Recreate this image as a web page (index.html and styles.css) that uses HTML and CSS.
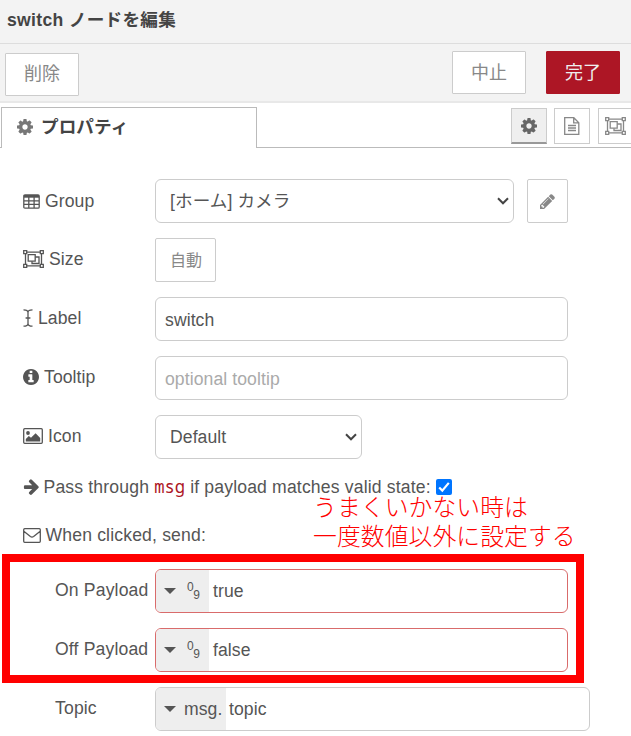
FILE: index.html
```html
<!DOCTYPE html>
<html lang="ja">
<head>
<meta charset="utf-8">
<title>switch ノードを編集</title>
<link rel="stylesheet" href="styles.css">
</head>
<body>
<svg class="defs" aria-hidden="true">
<symbol id="cog" viewBox="128 128 1536 1536"><path d="M1152 896q0-106-75-181t-181-75-181 75-75 181 75 181 181 75 181-75 75-181zm512-109v222q0 12-8 23t-20 13l-185 28q-19 54-39 91 35 50 107 138 10 12 10 25t-9 23q-27 37-99 108t-94 71q-12 0-26-9l-138-108q-44 23-91 38-16 136-29 186-7 28-36 28h-222q-14 0-24.5-8.5t-11.5-21.5l-28-184q-49-16-90-37l-141 107q-10 9-25 9-14 0-25-11-126-114-165-168-7-10-7-23 0-12 8-23 15-21 51-66.5t54-70.5q-27-50-41-99l-183-27q-13-2-21-12.5t-8-23.5v-222q0-12 8-23t19-13l186-28q14-46 39-92-40-57-107-138-10-12-10-24 0-10 9-23 26-36 98.5-107.5t94.5-71.5q13 0 26 10l138 107q44-23 91-38 16-136 29-186 7-28 36-28h222q14 0 24.5 8.5t11.5 21.5l28 184q49 16 90 37l142-107q9-9 24-9 13 0 25 10 129 119 165 170 7 8 7 22 0 12-8 23-15 21-51 66.5t-54 70.5q26 50 41 98l183 28q13 2 21 12.5t8 23.5z"/></symbol>
<symbol id="group" viewBox="0 0 21 18"><g fill="none" stroke="currentColor" stroke-width="1.3"><path d="M2.5 3.5v11M18.500 3.500v11M3.500 2.200h14M3.500 15.800h14"/><path d="M.7.7h3v3h-3zM17.300.7h3v3h-3zM.7 14.300h3v3h-3zM17.300 14.300h3v3h-3z"/><path d="M5.200 4.600h7v6.600h-7z"/><path d="M12.200 7h3.800v6.500H9v-2.300"/></g></symbol>
</svg>
<header class="title">switch ノードを編集</header>
<div class="toolbar">
  <button class="btn delete">削除</button>
  <button class="btn cancel">中止</button>
  <button class="btn done">完了</button>
</div>
<nav class="tabs">
  <div class="tab"><svg class="i16"><use href="#cog"/></svg><span>プロパティ</span></div>
  <div class="tab-tools">
    <div class="tool active"><svg class="i16"><use href="#cog"/></svg></div>
    <div class="tool"><svg class="doc" viewBox="0 0 16 18"><g fill="none" stroke="currentColor" stroke-width="1.3"><path d="M1.500.7h8.300l5 5v11.600H.7V.7zM9.700.7v5.200h5.100"/><path d="M4 8.500h8M4 11h8M4 13.500h8"/></g></svg></div>
    <div class="tool"><svg class="grp"><use href="#group"/></svg></div>
  </div>
</nav>
<main class="form">
  <div class="row">
    <label><svg class="tbl" viewBox="0 0 17 15"><path fill="none" stroke="currentColor" stroke-width="1.300" d="M2 .8h13q1.200 0 1.200 1.200v11q0 1.200-1.200 1.200H2Q.8 14.200.8 13V2Q.8.800 2 .8zM.8 6.800h15.400M.8 10.400h15.400M5.800 3v11M11.100 3v11"/><path d="M1 1h15v2.700H1z"/></svg>Group</label>
    <div class="field select wide">[ホーム] カメラ<svg class="chev" viewBox="0 0 12 8"><path d="M1 1.300l5 5 5-5"/></svg></div>
    <div class="edit"><svg viewBox="128 128 1536 1536"><path d="M491 1536l91-91-235-235-91 91v107h128v128h107zm523-928q0-22-22-22-10 0-17 7l-542 542q-7 7-7 17 0 22 22 22 10 0 17-7l542-542q7-7 7-17zm-54-192l416 416-832 832h-416v-416zm683 96q0 53-37 90l-166 166-416-416 166-165q36-38 90-38 53 0 91 38l235 234q37 39 37 91z"/></svg></div>
  </div>
  <div class="row raised">
    <label><svg class="grp"><use href="#group"/></svg>Size</label>
    <div class="auto">自動</div>
  </div>
  <div class="row raised">
    <label><svg class="beam" viewBox="0 0 10 18"><path fill="none" stroke="currentColor" stroke-width="1.300" d="M.5.8Q5 .8 5 3.500 5 .8 9.500.8M5 3.500v11M.5 17.200Q5 17.200 5 14.500 5 17.200 9.500 17.200M2.600 9h4.800"/></svg>Label</label>
    <div class="field">switch</div>
  </div>
  <div class="row raised">
    <label><svg class="i16" viewBox="128 128 1536 1536"><path d="M1152 1376v-160q0-14-9-23t-23-9h-96v-512q0-14-9-23t-23-9h-320q-14 0-23 9t-9 23v160q0 14 9 23t23 9h96v320h-96q-14 0-23 9t-9 23v160q0 14 9 23t23 9h448q14 0 23-9t9-23zm-128-896v-160q0-14-9-23t-23-9h-192q-14 0-23 9t-9 23v160q0 14 9 23t23 9h192q14 0 23-9t9-23zm640 416q0 209-103 385.500t-279.500 279.500-385.500 103-385.500-103-279.500-279.500-103-385.500 103-385.500 279.500-279.500 385.500-103 385.500 103 279.500 279.500 103 385.500z"/></svg>Tooltip</label>
    <div class="field placeholder">optional tooltip</div>
  </div>
  <div class="row raised">
    <label><svg class="img" viewBox="0 0 20 16"><rect x=".7" y=".7" width="18.600" height="14.600" rx="1" fill="none" stroke="currentColor" stroke-width="1.300"/><circle cx="5" cy="5" r="1.900"/><path d="M2.800 13.500V11l3-3L8 9.800l4.600-4.500 4.600 4.600v3.600z"/></svg>Icon</label>
    <div class="field select short">Default<svg class="chev" viewBox="0 0 12 8"><path d="M1 1.300l5 5 5-5"/></svg></div>
  </div>
  <div class="line pass"><svg class="arrow" viewBox="64 150 1536 1590"><path d="M1600 960q0 54-37 91l-651 651q-39 37-91 37-51 0-90-37l-75-75q-38-38-38-91t38-91l293-293h-704q-52 0-84.500-37.500t-32.500-90.500v-128q0-53 32.500-90.500t84.500-37.500h704l-293-294q-38-36-38-90t38-90l75-75q38-38 90-38 53 0 91 38l651 651q37 35 37 90z"/></svg><span>Pass through <code>msg</code> if payload matches valid state:</span><span class="check"><svg viewBox="0 0 16 16"><path d="M3.200 8.500l3.100 3.100 6.500-7.700"/></svg></span></div>
  <div class="line send"><svg class="mail" viewBox="0 0 18 15"><path fill="none" stroke="currentColor" stroke-width="1.300" d="M1.700.7h14.600q1 0 1 1v11.600q0 1-1 1H1.700q-1 0-1-1V1.700q0-1 1-1zM.8 3.200l6.600 5.300q1.600 1.200 3.200 0l6.600-5.300"/></svg>When clicked, send:</div>
  <div class="row sub">
    <label>On Payload</label>
    <div class="field typed error"><span class="type"><i></i><span class="num"><b>0</b><b>9</b></span></span>true</div>
  </div>
  <div class="row sub">
    <label>Off Payload</label>
    <div class="field typed error"><span class="type"><i></i><span class="num"><b>0</b><b>9</b></span></span>false</div>
  </div>
  <div class="row sub">
    <label>Topic</label>
    <div class="field typed topic"><span class="type"><i></i>msg.</span>topic</div>
  </div>
</main>
<div class="highlight"></div>
<div class="note"><div>うまくいかない時は</div><div>一度数値以外に設定する</div></div>
</body>
</html>
```
FILE: styles.css
```css
* { box-sizing: border-box; }
body {
  margin: 0;
  width: 631px;
  height: 736px;
  overflow: hidden;
  position: relative;
  background: #fff;
  color: #555;
  font: 17.6px/24px "Liberation Sans", "Noto Sans CJK JP", sans-serif;
  letter-spacing: .08px;
  white-space: nowrap;
}
svg { fill: currentColor; display: block; flex: none; }
.defs { position: absolute; width: 0; height: 0; }
.title {
  height: 44px;
  padding: 8px 7px 0;
  background: #f3f3f3;
  border-bottom: 1px solid #ddd;
  color: #444;
  font-weight: bold;
  letter-spacing: .3px;
}
.toolbar {
  height: 59px;
  display: flex;
  align-items: flex-start;
  padding: 7px 11px 0 5px;
  background: #f3f3f3;
  border-bottom: 2px solid #e8e8e8;
}
.btn {
  width: 74px;
  height: 43px;
  padding: 0;
  border: 1px solid #ccc;
  border-radius: 1px;
  background: #fff;
  color: #888;
  font: inherit;
  font-size: 18px;
}
.delete { margin-top: 2px; padding-bottom: 1px; }
.cancel { margin-left: auto; }
.done { margin-left: 20px; background: #ad1625; border-color: #ad1625; color: #eee; }
.tabs {
  height: 45px;
  display: flex;
  justify-content: space-between;
  padding: 4px 0 0 1px;
  box-shadow: inset 0 -1px #bbb;
}
.tab {
  width: 256px;
  height: 41px;
  display: flex;
  align-items: center;
  gap: 8px;
  padding: 0 0 3px 15px;
  border: 1px solid #bbb;
  border-bottom: 0;
  background: #fff;
  color: #444;
  font-weight: bold;
}
.tab svg { color: #777; }
.i16 { width: 16px; height: 16px; }
.tab-tools { display: flex; gap: 7.500px; margin: 1px -1.500px 0 0; color: #888; }
.tool {
  width: 36px;
  height: 36px;
  display: flex;
  align-items: center;
  justify-content: center;
  border: 1px solid #ccc;
}
.tool:last-child { width: 35px; }
.tool.active { background: #efefef; border-bottom: 2px solid #999; color: #666; }
.doc { width: 16px; height: 18px; }
.grp { width: 21px; height: 18px; }
.form { padding: 31px 0 0 23px; }
.row { height: 44px; display: flex; margin-bottom: 15px; }
label {
  width: 132px;
  height: 44px;
  display: flex;
  align-items: center;
  gap: 5px;
}
.raised label { height: 41px; }
.field {
  width: 413px;
  height: 44px;
  display: flex;
  align-items: center;
  padding: 1px 9px 0;
  border: 1px solid #ccc;
  border-radius: 6px;
}
.select { justify-content: space-between; padding: 0 4px 0 14px; }
.wide { width: 359px; }
.short { width: 207px; }
.chev { width: 12px; height: 8px; fill: none; stroke: #444; stroke-width: 2; }
.edit {
  width: 41px;
  height: 44px;
  margin-left: 13px;
  display: flex;
  align-items: center;
  justify-content: center;
  border: 1px solid #ccc;
  border-radius: 2px;
  color: #888;
}
.edit svg { width: 15px; height: 15px; }
.auto {
  width: 61px;
  height: 44px;
  padding-left: 1px;
  line-height: 43px;
  text-align: center;
  border: 1px solid #ccc;
  border-radius: 2px;
  color: #888;
  font-size: 16px;
}
.tbl { width: 17px; height: 15px; }
.beam { width: 10px; height: 18px; }
.img { width: 20px; height: 16px; }
.placeholder { color: #aaa; }
.line { height: 24px; display: flex; align-items: center; gap: 4.500px; }
.pass { margin-top: 16px; letter-spacing: .16px; }
.send { margin: 24px 0 22px; letter-spacing: .16px; }
.arrow { width: 16px; height: 16px; }
.mail { width: 18px; height: 15px; }
code { font: 17.200px/20px "Noto Sans Mono", "DejaVu Sans Mono", monospace; letter-spacing: 0; color: #ad1625; }
.check { width: 16px; height: 16px; margin-left: 1px; border-radius: 2px; background: #0075ff; }
.check svg { width: 16px; height: 16px; fill: none; stroke: #fff; stroke-width: 2.200; }
.sub label { padding-left: 32px; height: 42px; letter-spacing: .15px; }
.typed { padding: 0; overflow: hidden; }
.error { border-color: #d96b6b; }
.topic { width: 435px; }
.type {
  align-self: stretch;
  width: 53px;
  display: flex;
  align-items: center;
  margin-right: 4px;
  padding-left: 8px;
  background: #eee;
}
.topic .type { width: 70px; margin-right: 3px; }
.type i {
  border: 6px solid transparent;
  border-top: 6px solid #555;
  border-bottom: 0;
  margin-right: 8px;
}
.num { display: flex; margin: 4px 0 0 3px; }
.num b { font-size: 12px; font-weight: normal; line-height: 14px; }
.num b:first-child { margin-top: -4px; }
.num b:last-child { margin-top: 4px; margin-left: -.5px; }
.highlight {
  position: absolute;
  left: 2px;
  top: 554px;
  width: 582px;
  height: 129px;
  border: 8px solid #f00;
}
.note {
  position: absolute;
  left: 313px;
  top: 491px;
  color: #f00;
  font: 300 23.800px/29px "Noto Sans CJK JP", sans-serif;
}
```
